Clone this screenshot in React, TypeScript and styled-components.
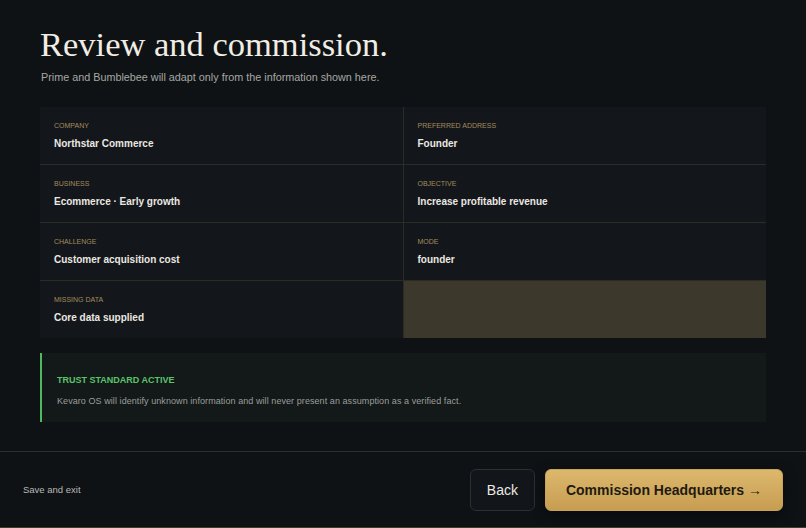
import styled, { createGlobalStyle } from "styled-components";

const GlobalStyle = createGlobalStyle`
  html, body {
    margin: 0;
    padding: 0;
    background: #0e1215;
  }
  * {
    box-sizing: border-box;
  }
`;

const Page = styled.div`
  width: 806px;
  height: 528px;
  display: flex;
  flex-direction: column;
  background: #0e1215;
  font-family: "Liberation Sans", Arial, sans-serif;
`;

const Main = styled.main`
  flex: 1;
  padding: 22px 40px 0 40px;
`;

const Title = styled.h1`
  margin: 0;
  font-family: "Liberation Serif", "Times New Roman", serif;
  font-weight: 400;
  font-size: 34.5px;
  line-height: 44px;
  color: #f1ede4;
`;

const Subtitle = styled.p`
  margin: 3px 0 0 1px;
  font-size: 10.8px;
  line-height: 16px;
  color: #a7a7a3;
`;

const Grid = styled.div`
  margin-top: 22px;
  display: grid;
  grid-template-columns: 1fr 1fr;
  gap: 1px;
  background: #2c2b26;
`;

const Cell = styled.div<{ $empty?: boolean }>`
  height: 57px;
  padding: 14px 14px 0 14px;
  background: ${(p) => (p.$empty ? "#3c382b" : "#13171b")};
`;

const Label = styled.div`
  font-size: 7px;
  line-height: 10px;
  text-transform: uppercase;
  color: #a38b5c;
`;

const Value = styled.div`
  margin-top: 6px;
  font-size: 10px;
  line-height: 14px;
  font-weight: 700;
  color: #ebe8e1;
`;

const Trust = styled.div`
  margin-top: 15px;
  height: 69px;
  padding: 21px 16px 0 15px;
  background: #121918;
  border-left: 2px solid #4fb860;
`;

const TrustTitle = styled.div`
  font-size: 9px;
  line-height: 12px;
  font-weight: 700;
  color: #5cc36a;
`;

const TrustText = styled.div`
  margin-top: 9px;
  font-size: 9px;
  line-height: 12px;
  letter-spacing: 0.07px;
  color: #9c9d9b;
`;

const Footer = styled.footer`
  height: 77px;
  display: flex;
  align-items: center;
  justify-content: space-between;
  padding: 0 23px;
  border-top: 1px solid #2d2e2a;
  border-bottom: 1px solid #3f4028;
`;

const SaveLink = styled.span`
  font-size: 9.5px;
  color: #b9b9b5;
`;

const Actions = styled.div`
  display: flex;
  gap: 10px;
`;

const Button = styled.button<{ $primary?: boolean }>`
  height: 42px;
  padding: 0 ${(p) => (p.$primary ? "20px" : "16px")};
  border-radius: 6px;
  font-family: "Liberation Sans", Arial, sans-serif;
  font-size: 14px;
  cursor: pointer;
  border: 1px solid ${(p) => (p.$primary ? "#c9a458" : "#2c2f33")};
  background: ${(p) =>
    p.$primary ? "linear-gradient(180deg, #dcb86d 0%, #c79d51 100%)" : "#12161a"};
  color: ${(p) => (p.$primary ? "#1f1a10" : "#ebe9e4")};
  font-weight: ${(p) => (p.$primary ? 700 : 400)};
  box-shadow: ${(p) => (p.$primary ? "0 4px 14px rgba(0,0,0,0.45)" : "none")};
`;

const fields = [
  ["Company", "Northstar Commerce"],
  ["Preferred address", "Founder"],
  ["Business", "Ecommerce · Early growth"],
  ["Objective", "Increase profitable revenue"],
  ["Challenge", "Customer acquisition cost"],
  ["Mode", "founder"],
  ["Missing data", "Core data supplied"],
];

export default function App() {
  return (
    <Page>
      <GlobalStyle />
      <Main>
        <Title>Review and commission.</Title>
        <Subtitle>Prime and Bumblebee will adapt only from the information shown here.</Subtitle>
        <Grid>
          {fields.map(([label, value]) => (
            <Cell key={label}>
              <Label>{label}</Label>
              <Value>{value}</Value>
            </Cell>
          ))}
          <Cell $empty />
        </Grid>
        <Trust>
          <TrustTitle>TRUST STANDARD ACTIVE</TrustTitle>
          <TrustText>
            Kevaro OS will identify unknown information and will never present an assumption as a verified fact.
          </TrustText>
        </Trust>
      </Main>
      <Footer>
        <SaveLink>Save and exit</SaveLink>
        <Actions>
          <Button>Back</Button>
          <Button $primary>Commission Headquarters →</Button>
        </Actions>
      </Footer>
    </Page>
  );
}
